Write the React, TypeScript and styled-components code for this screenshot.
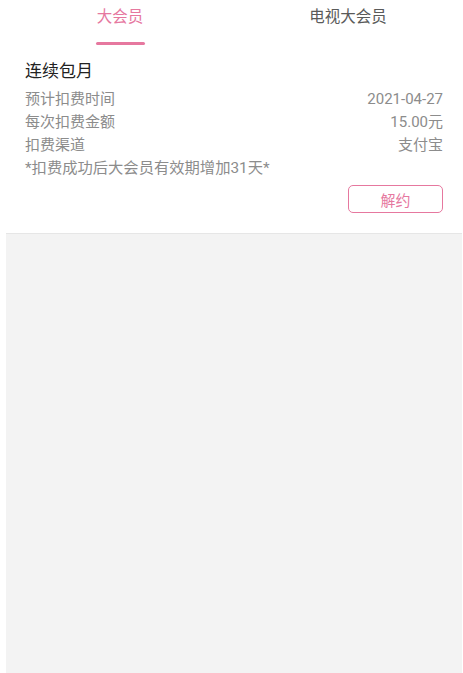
import React from "react";
import styled, { createGlobalStyle } from "styled-components";

const GlobalStyle = createGlobalStyle`
  html, body {
    margin: 0;
    padding: 0;
    background: #fff;
    font-family: Roboto, "Noto Sans CJK SC", sans-serif;
  }
`;

const PINK = "#e6789f";

const SCPage = styled.div`
  width: 463px;
  height: 673px;
  display: flex;
  flex-direction: row;
  background: #fff;
  overflow: hidden;
`;

const SCMain = styled.div`
  flex: 1;
  display: flex;
  flex-direction: column;
`;

const SCScrollTrack = styled.div`
  width: 3px;
  margin-right: 1px;
  background: #c9c9c9;
`;

const SCTabs = styled.nav`
  display: grid;
  grid-template-columns: 228px 228px;
  padding-left: 6px;
  height: 45px;
`;

const SCTab = styled.div<{ $active?: boolean }>`
  display: flex;
  flex-direction: column;
  align-items: center;
  padding-top: 6px;
  font-size: 15.5px;
  line-height: 22px;
  color: ${(p) => (p.$active ? PINK : "#5a5a5a")};

  .bar {
    margin-top: 14px;
    width: 49px;
    height: 3px;
    border-radius: 2px;
    background: ${(p) => (p.$active ? PINK : "transparent")};
  }
`;

const SCCard = styled.section`
  display: flex;
  flex-direction: column;
  padding: 14px 19px 20px 25px;

  h2 {
    margin: 0 0 5px;
    font-size: 17px;
    line-height: 24px;
    font-weight: 400;
    color: #222;
  }
`;

const SCRow = styled.div`
  display: flex;
  justify-content: space-between;
  font-size: 15px;
  line-height: 23px;
  color: #8c8c8c;
`;

const SCNote = styled.p`
  margin: 0;
  font-size: 15.3px;
  line-height: 23px;
  color: #8c8c8c;
`;

const SCButton = styled.button`
  align-self: flex-end;
  margin-top: 5px;
  width: 95px;
  height: 28px;
  border: 1px solid ${PINK};
  border-radius: 5px;
  background: #fff;
  color: ${PINK};
  font-family: inherit;
  font-size: 15px;
  padding: 0;
`;

const SCPanel = styled.div`
  flex: 1;
  margin-left: 6px;
  border-top: 1px solid #e6e6e6;
  background: #f3f3f3;
`;

const rows = [
  { label: "预计扣费时间", value: "2021-04-27" },
  { label: "每次扣费金额", value: "15.00元" },
  { label: "扣费渠道", value: "支付宝" },
];

const App = () => {
  return (
    <>
      <GlobalStyle />
      <SCPage>
        <SCMain>
          <SCTabs>
            <SCTab $active>
              <span>大会员</span>
              <div className="bar" />
            </SCTab>
            <SCTab>
              <span>电视大会员</span>
              <div className="bar" />
            </SCTab>
          </SCTabs>
          <SCCard>
            <h2>连续包月</h2>
            {rows.map((r) => (
              <SCRow key={r.label}>
                <span>{r.label}</span>
                <span>{r.value}</span>
              </SCRow>
            ))}
            <SCNote>*扣费成功后大会员有效期增加31天*</SCNote>
            <SCButton>解约</SCButton>
          </SCCard>
          <SCPanel />
        </SCMain>
        <SCScrollTrack />
      </SCPage>
    </>
  );
};

export default App;
